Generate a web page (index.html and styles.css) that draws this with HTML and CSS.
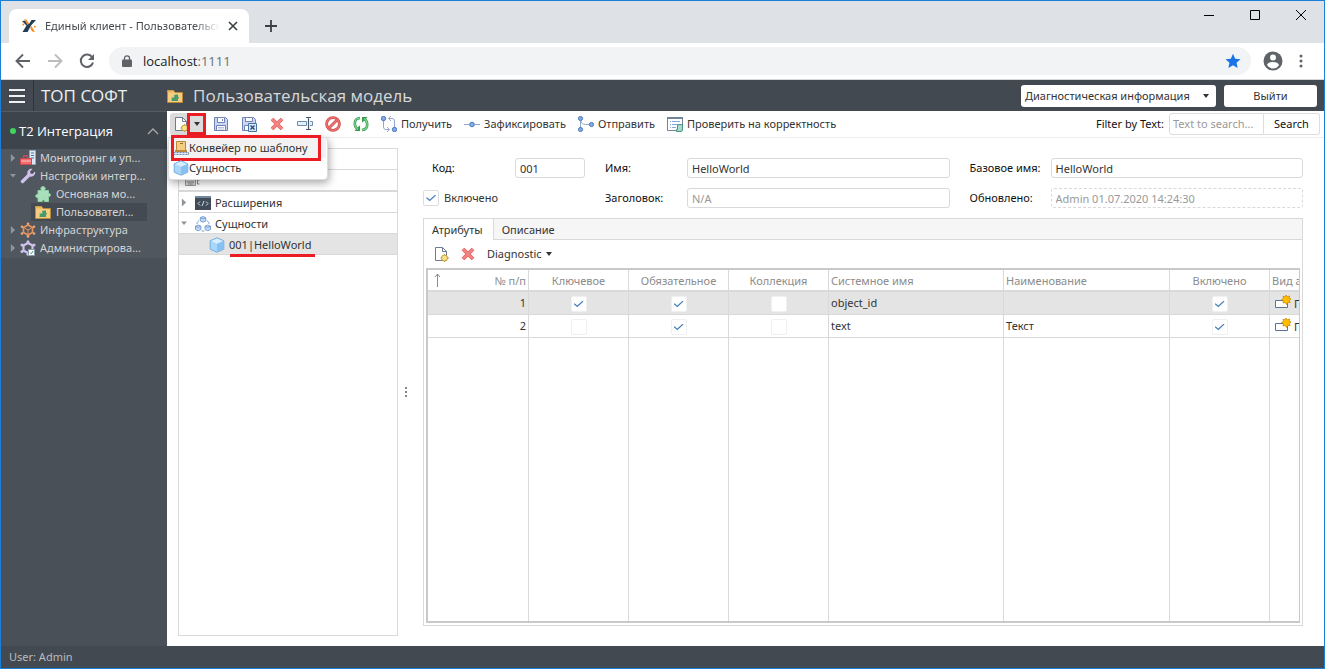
FILE: index.html
```html
<!DOCTYPE html>
<html lang="ru">
<head>
<meta charset="utf-8">
<title>Единый клиент - Пользовательская модель</title>
<link rel="stylesheet" href="styles.css">
</head>
<body>
<svg class="defs" aria-hidden="true">
  <symbol id="i-folder" viewBox="0 0 16 16"><path d="M0.5 2.5h6l1.500 2h7.500v10h-15z" fill="#f6cc80" stroke="#b98a3c"/><path d="M.5 2.500h6l1 2h-7z" fill="#e9b55b"/><path d="M4.500 9.500h3c-1-2 0-3 1-2.500V6.500h2.500v2.500c1.500-.5 1.500 1.500 0 1.500v2.500h-6.500v-1.500c1 0 1-1 0-1z" fill="#459a70"/></symbol>
  <symbol id="i-new" viewBox="0 0 16 16"><path d="M2.500 1.500h7l4 4v9h-11z" fill="#fff" stroke="#6d7c91"/><path d="M9.500 1.500v4h4" fill="none" stroke="#6d7c91"/><circle cx="11.500" cy="12" r="3" fill="#fbe38b" stroke="#c29a3d"/><path d="M11.500 8v1M11.500 15v1M7.500 12h1M14.500 12h1.500" stroke="#c29a3d"/></symbol>
  <symbol id="i-save" viewBox="0 0 16 16"><path d="M1.500 1.500h11l2 2v11h-13z" fill="#cad6f3" stroke="#7183b3"/><path d="M4.500 1.500h7v5h-7zM3.500 9.500h9v5h-9z" fill="#fff" stroke="#7183b3"/><path d="M9.500 3v2" stroke="#7183b3"/><path d="M5 11.500h6M5 13h6" stroke="#b9c2d7"/></symbol>
  <symbol id="i-saveclose" viewBox="0 0 16 16"><path d="M1.500 1.500h11l2 2v11h-13z" fill="#cad6f3" stroke="#7183b3"/><path d="M4.500 1.500h7v4h-7zM3.500 9.500h6v5h-6z" fill="#fff" stroke="#7183b3"/><path d="M7.500 7.500h8v8h-8z" fill="#d7e8ff" stroke="#4774a9"/><path d="M9.500 9.500l4 4M13.500 9.500l-4 4" stroke="#24486f" stroke-width="1.300"/></symbol>
  <symbol id="i-del" viewBox="0 0 16 16"><path d="M3 3l10 10M13 3L3 13" stroke="#e56565" stroke-width="3.800"/><path d="M3 3l10 10M13 3L3 13" stroke="#f58583" stroke-width="2"/></symbol>
  <symbol id="i-rename" viewBox="0 0 16 16"><path d="M.5 5.500h9v4h-9zM13 5.500h2.500v4H13" fill="#e4f0fc" stroke="#6e8cac"/><path d="M9 1.500h2l.5.5.5-.5h2M9 13.500h2l.5-.5.5.5h2M11.500 2v11" fill="none" stroke="#46566b" stroke-width="1.200"/></symbol>
  <symbol id="i-ban" viewBox="0 0 16 16"><circle cx="8" cy="8" r="6.400" fill="none" stroke="#c94444" stroke-width="2.800"/><circle cx="8" cy="8" r="6.400" fill="none" stroke="#f17876" stroke-width="1.400"/><path d="M3.700 12.300l8.600-8.600" stroke="#c94444" stroke-width="2.800"/><path d="M3.700 12.300l8.600-8.600" stroke="#f17876" stroke-width="1.400"/></symbol>
  <symbol id="i-refresh" viewBox="0 0 16 16"><path d="M7 2Q1.500 2.500 1.800 8q.2 3.500 3.200 5.500M9 14q5.500-.5 5.200-6-.2-3.500-3.200-5.500" fill="none" stroke="#399b50" stroke-width="2.600"/><path d="M1.500 15h5.500V9.500L5 11zM14.500 1H9v5.500L11 5z" fill="#399b50"/><path d="M7 2Q1.500 2.500 1.800 8q.2 3.500 3.200 5.500M9 14q5.500-.5 5.200-6-.2-3.500-3.200-5.500" fill="none" stroke="#7fd890" stroke-width="1.100"/></symbol>
  <symbol id="i-pull" viewBox="0 0 16 16"><path d="M2.500 3v8q0 2.500 2.500 2.500h3M6 11l2.500 2.500L6 16M13.500 13V5q0-2.500-2.500-2.500H8M10 0L7.500 2.500 10 5" fill="none" stroke="#93a9ca"/><circle cx="2.500" cy="2.500" r="2.200" fill="#7fabe9" stroke="#5079b8"/><circle cx="13.500" cy="13.500" r="2.200" fill="#7fabe9" stroke="#5079b8"/></symbol>
  <symbol id="i-commit" viewBox="0 0 16 16"><path d="M0 8.500h16" stroke="#93a9ca"/><circle cx="8" cy="8.500" r="2.300" fill="#7fabe9" stroke="#5079b8"/></symbol>
  <symbol id="i-push" viewBox="0 0 16 16"><path d="M2.500 3v10M2.500 4q1 4.500 5 4.500h6" fill="none" stroke="#93a9ca"/><circle cx="2.500" cy="2.500" r="2.100" fill="#7fabe9" stroke="#5079b8"/><circle cx="2.500" cy="13.500" r="2.100" fill="#7fabe9" stroke="#5079b8"/><circle cx="13.500" cy="8.500" r="2.100" fill="#7fabe9" stroke="#5079b8"/></symbol>
  <symbol id="i-check" viewBox="0 0 16 16"><path d="M.5 1.500h15v13H.5z" fill="#fff" stroke="#71849c"/><path d="M0 2h16" stroke="#71849c" stroke-width="2"/><path d="M3 5.500h1M3 8.500h1M3 11.500h1M5 5.500h8M5 8.500h5M5 11.500h4" stroke="#7fa8df"/><path d="M10.500 8.500h5v5l-1 2h-5v-2h1z" fill="#acd9cc" stroke="#459584"/></symbol>
  <symbol id="i-conv" viewBox="0 0 16 16"><path d="M3.500 1.500h9v9h-9z" fill="#f6cc80" stroke="#b98a3c"/><path d="M7 3.500h3" stroke="#9a722e"/><path d="M2 11h12" stroke="#b98a3c" stroke-width="2"/><path d="M.5 12.500h15v2H.5z" fill="#dbe5f4" stroke="#7389a8" stroke-dasharray="2 1"/></symbol>
  <symbol id="i-cube" viewBox="0 0 16 16"><path d="M8 .8l6.800 3v8.400l-6.800 3-6.800-3V3.800z" fill="#a8d7fb" stroke="#76aede"/><path d="M8 1.500l5.800 2.600L8 6.700 2.200 4.100z" fill="#d6eeff"/><path d="M8 7v7.500l6-2.700V4.500z" fill="#86c1f2"/></symbol>
  <symbol id="i-cubes" viewBox="0 0 16 16"><g fill="#c5e0fa" stroke="#6d95c9" stroke-width=".9"><path d="M8 .5l2.700 1.200v3.300L8 6.200 5.300 5V1.700zM3.200 9l2.700 1.200v3.300l-2.700 1.200-2.700-1.200v-3.300zM12.800 9l2.700 1.200v3.300l-2.700 1.200-2.700-1.200v-3.300z"/><path d="M5.300 1.700L8 3l2.700-1.300M.5 10.200l2.700 1.300 2.700-1.300M10.100 10.200l2.700 1.300 2.700-1.300M4 4.500Q1.800 6 1.800 8M12 4.500q2.200 1.500 2.200 3.500M6.500 14.800q1.500.8 3 0" fill="none"/></g></symbol>
  <symbol id="i-code" viewBox="0 0 16 16"><path d="M0 1h16v14H0z" fill="#414b57"/><path d="M0 2h16" stroke="#73879c" stroke-width="2"/><path d="M5 6.500l-2 2 2 2M11 6.500l2 2-2 2M9 6l-2 5" fill="none" stroke="#c9e0ed"/></symbol>
  <symbol id="i-puzzle" viewBox="0 0 16 16"><path d="M3 4.500h3.500C5 2 6.500.5 8 .5S11 2 9.500 4.500h4v3c2.500-1 2.500 4 0 3v5H9.300c.8-2-2.600-2-2 0H3v-4c-3 1-3-4 0-3z" fill="#a9dfba" stroke="#8ccfa3"/></symbol>
  <symbol id="i-wrench" viewBox="0 0 16 16"><path d="M2.500 13.500l6-6" stroke="#cfc2ec" stroke-width="3.400" stroke-linecap="round"/><path d="M12.500 1L10 3.500l.5 2 2 .5L15 3.500c1 3-2 6-5.500 5L7.500 6.500C6.500 3 9.500 0 12.500 1z" fill="#cfc2ec"/></symbol>
  <symbol id="i-tools" viewBox="0 0 16 16"><path d="M9.500.5h6v14h-6z" fill="#dce8f6" stroke="#91a9c5"/><path d="M11 3h3M11 5.500h3M11 8h3" stroke="#5577a0"/><path d="M3.500 8V6h4v2" fill="none" stroke="#d24a4e" stroke-width="1.300"/><path d="M.5 8.500h11v6H.5z" fill="#f26d71" stroke="#ce494d"/><path d="M1 11h10" stroke="#ffc0bd"/></symbol>
  <symbol id="i-infra" viewBox="0 0 16 16"><path d="M8 3l4.500 2.500v5L8 13l-4.500-2.500v-5z" fill="none" stroke="#e7935c" stroke-width="1.700"/><path d="M8 8v4M8 8L4.500 6M8 8l3.500-2" stroke="#e7935c"/><g fill="#f1a674"><circle cx="8" cy="1.700" r="1.300"/><circle cx="2" cy="4.700" r="1.300"/><circle cx="14" cy="4.700" r="1.300"/><circle cx="2" cy="11.500" r="1.300"/><circle cx="14" cy="11.500" r="1.300"/><circle cx="8" cy="14.400" r="1.300"/></g></symbol>
  <symbol id="i-admin" viewBox="0 0 16 16"><path d="M8 3l4.500 2.500v5L8 13l-4.500-2.500v-5z" fill="none" stroke="#cfc2ec" stroke-width="2.200"/><g fill="#cfc2ec"><circle cx="8" cy="1.800" r="1.500"/><circle cx="2" cy="5" r="1.500"/><circle cx="14" cy="5" r="1.500"/><circle cx="2" cy="11.500" r="1.500"/><circle cx="8" cy="14.300" r="1.500"/></g><path d="M8.500 9.500h6v6h-6z" fill="#fff" stroke="#8a98a8"/><path d="M10 12.500l1.200 1.200 2-2.700" fill="none" stroke="#2f9a5e"/></symbol>
  <symbol id="i-kind" viewBox="0 0 16 16"><path d="M.5 5.500h12v7H.5z" fill="#fff" stroke="#5b7196"/><path d="M11 0l1.300 1.800L14.500 1l-.2 2.300 1.700.7-1.700 1.500.9 2-2.300-.1L11.500 9.500l-1.300-2-2.200.5.400-2.200L6.500 4.500l2-1L8 1.300l2.200.5z" fill="#ffbf00" stroke="#cf8616" stroke-width=".8"/></symbol>
</svg>

<div class="window">
  <header class="tabstrip">
    <div class="tab">
      <svg class="icon" viewBox="0 0 16 16"><path d="M1 3l4-.5 3 3.500 2.500-4H15L10 7.500 6.500 14H1.500l4-6.500z" fill="#213d59"/><path d="M3 1.500h2.500L8 5.500 6.500 7zM9 9.500L10.500 8l3.500 6-3-.5zM.5 5.500l3 .5-1 2zM12.500 7.500l3 1-2 1.500z" fill="#f3922c"/></svg>
      <span class="tab-title">Единый клиент - Пользовательская модель</span>
      <button class="plain" aria-label="Закрыть вкладку"><svg width="10" height="10" viewBox="0 0 10 10"><path d="M1 1l8 8M9 1L1 9" stroke="#3c4043" stroke-width="1.600"/></svg></button>
    </div>
    <button class="plain newtab" aria-label="Новая вкладка"><svg width="14" height="14" viewBox="0 0 14 14"><path d="M7 1v12M1 7h12" stroke="#3c4043" stroke-width="1.800"/></svg></button>
    <div class="winbtns">
      <button class="plain" aria-label="Свернуть"><svg width="10" height="10" viewBox="0 0 10 10"><path d="M0 5.500h10" stroke="#000"/></svg></button>
      <button class="plain" aria-label="Развернуть"><svg width="10" height="10" viewBox="0 0 10 10"><path d="M.5.5h9v9h-9z" fill="none" stroke="#000"/></svg></button>
      <button class="plain" aria-label="Закрыть"><svg width="10" height="10" viewBox="0 0 10 10"><path d="M0 0l10 10M10 0L0 10" stroke="#000"/></svg></button>
    </div>
  </header>
  <div class="navbar">
    <button class="plain" aria-label="Назад"><svg width="16" height="16" viewBox="0 0 16 16"><path d="M15 8H2M8 1.500L1.500 8 8 14.500" fill="none" stroke="#5f6368" stroke-width="1.900"/></svg></button>
    <button class="plain" aria-label="Вперёд"><svg width="16" height="16" viewBox="0 0 16 16"><path d="M1 8h13M8 1.500L14.500 8 8 14.500" fill="none" stroke="#babcbe" stroke-width="1.900"/></svg></button>
    <button class="plain" aria-label="Обновить"><svg width="16" height="16" viewBox="0 0 16 16"><path d="M13.300 4.500A6.200 6.200 0 1 0 14 9.500" fill="none" stroke="#5f6368" stroke-width="2"/><path d="M15 1v6H9z" fill="#5f6368"/></svg></button>
    <div class="address">
      <svg width="10" height="12" viewBox="0 0 10 12"><path d="M1 4.500h8q1 0 1 1V11q0 1-1 1H1q-1 0-1-1V5.500q0-1 1-1z" fill="#5f6368"/><path d="M2.500 5V3a2.500 2.200 0 0 1 5 0v2" fill="none" stroke="#5f6368" stroke-width="1.300"/></svg>
      <span class="url">localhost<span class="port">:1111</span></span>
      <svg class="icon star" viewBox="0 0 16 16"><path d="M8 .8l2.200 4.900 5.300.5-4 3.500 1.200 5.300L8 12.200 3.300 15l1.200-5.300-4-3.500 5.300-.5z" fill="#1a73e8"/></svg>
    </div>
    <button class="plain" aria-label="Профиль"><svg width="20" height="20" viewBox="0 0 20 20"><circle cx="10" cy="10" r="9.500" fill="#5f6368"/><circle cx="10" cy="6.500" r="3" fill="#fff"/><path d="M4 14q1-3 6-3t6 3q-2 3.500-6 3.500T4 14z" fill="#fff"/></svg></button>
    <button class="plain" aria-label="Меню"><svg width="4" height="14" viewBox="0 0 4 14"><g fill="#5f6368"><circle cx="2" cy="2" r="1.500"/><circle cx="2" cy="7" r="1.500"/><circle cx="2" cy="12" r="1.500"/></g></svg></button>
  </div>

  <div class="apphead">
    <button class="plain burger" aria-label="Меню приложения"><svg width="16" height="14" viewBox="0 0 16 14"><path d="M0 1h16M0 7h16M0 13h16" stroke="#eef0f1" stroke-width="2"/></svg></button>
    <div class="brand">ТОП СОФТ</div>
    <svg class="icon"><use href="#i-folder"/></svg>
    <h1>Пользовательская модель</h1>
    <button class="whitebtn diag">Диагностическая информация <i class="caret"></i></button>
    <button class="whitebtn exit">Выйти</button>
  </div>

  <div class="appbody">
    <nav class="sidebar">
      <div class="group"><i class="dot"></i><span>T2 Интеграция</span><svg width="12" height="7" viewBox="0 0 12 7"><path d="M1 6l5-5 5 5" fill="none" stroke="#a5a9ad" stroke-width="1.300"/></svg></div>
      <ul class="menu">
        <li><i class="tri"></i><svg class="icon"><use href="#i-tools"/></svg><span>Мониторинг и уп...</span></li>
        <li><i class="tri open"></i><svg class="icon"><use href="#i-wrench"/></svg><span>Настройки интегр...</span></li>
        <li class="sub"><svg class="icon"><use href="#i-puzzle"/></svg><span>Основная мо...</span></li>
        <li class="sub current"><svg class="icon"><use href="#i-folder"/></svg><span>Пользовател...</span></li>
        <li><i class="tri"></i><svg class="icon"><use href="#i-infra"/></svg><span>Инфраструктура</span></li>
        <li><i class="tri"></i><svg class="icon"><use href="#i-admin"/></svg><span>Администрирова...</span></li>
      </ul>
    </nav>

    <main class="main">
      <div class="toolbar">
        <div class="split">
          <button class="plain" aria-label="Создать"><svg class="icon"><use href="#i-new"/></svg></button>
          <button class="plain marked" aria-label="Варианты создания"><i class="caret"></i></button>
          <ul class="popup">
            <li class="hot"><svg class="icon"><use href="#i-conv"/></svg>Конвейер по шаблону</li>
            <li><svg class="icon"><use href="#i-cube"/></svg>Сущность</li>
          </ul>
        </div>
        <div class="tools">
          <button class="plain" aria-label="Сохранить"><svg class="icon"><use href="#i-save"/></svg></button>
          <button class="plain" aria-label="Сохранить и закрыть"><svg class="icon"><use href="#i-saveclose"/></svg></button>
          <button class="plain" aria-label="Удалить"><svg class="icon"><use href="#i-del"/></svg></button>
          <button class="plain" aria-label="Переименовать"><svg class="icon"><use href="#i-rename"/></svg></button>
          <button class="plain" aria-label="Отменить"><svg class="icon"><use href="#i-ban"/></svg></button>
          <button class="plain" aria-label="Обновить модель"><svg class="icon"><use href="#i-refresh"/></svg></button>
          <button class="plain"><svg class="icon"><use href="#i-pull"/></svg>Получить</button>
          <button class="plain"><svg class="icon"><use href="#i-commit"/></svg>Зафиксировать</button>
          <button class="plain"><svg class="icon"><use href="#i-push"/></svg>Отправить</button>
          <button class="plain"><svg class="icon"><use href="#i-check"/></svg>Проверить на корректность</button>
        </div>
        <div class="filter">
          <label for="filter">Filter by Text:</label>
          <input id="filter" type="text" placeholder="Text to search..."><button>Search</button>
        </div>
      </div>

      <div class="work">
        <div class="tree">
          <div class="treerow"></div>
          <div class="treerow filterrow"><svg width="16" height="12" viewBox="0 0 16 12"><path d="M.5 1.500h10v9H.5z" fill="#ddd" stroke="#999"/><path d="M2 7h7M3 9h5M14.500 5h-2v4h2" fill="none" stroke="#888"/></svg></div>
          <div class="treerow"><i class="tri"></i><svg class="icon"><use href="#i-code"/></svg><span>Расширения</span></div>
          <div class="treerow"><i class="tri open"></i><svg class="icon"><use href="#i-cubes"/></svg><span>Сущности</span></div>
          <div class="treerow leaf"><svg class="icon"><use href="#i-cube"/></svg><span class="underlined">001|HelloWorld</span></div>
        </div>
        <div class="splitter"><i></i><i></i><i></i></div>

        <div class="detail">
          <form class="form">
            <label class="first" for="code">Код:</label><input id="code" type="text" value="001">
            <label for="name">Имя:</label><input id="name" type="text" value="HelloWorld">
            <label for="base">Базовое имя:</label><input id="base" type="text" value="HelloWorld">
            <label class="check"><input type="checkbox" checked>Включено</label>
            <label for="caption">Заголовок:</label><input id="caption" type="text" placeholder="N/A">
            <label for="updated">Обновлено:</label><input id="updated" class="readonly" type="text" value="Admin 01.07.2020 14:24:30" readonly>
          </form>

          <section class="panel">
            <div class="tabs" role="tablist"><button class="active" role="tab">Атрибуты</button><button role="tab">Описание</button></div>
            <div class="subtools">
              <button class="plain" aria-label="Создать атрибут"><svg class="icon"><use href="#i-new"/></svg></button>
              <button class="plain" aria-label="Удалить атрибут"><svg class="icon"><use href="#i-del"/></svg></button>
              <button class="plain">Diagnostic <i class="caret"></i></button>
            </div>
            <div class="gridwrap">
              <table>
                <colgroup><col class="w101"><col class="w100"><col class="w100"><col class="w100"><col class="w175"><col class="w166"><col class="w100"><col></colgroup>
                <thead><tr><th class="num"><svg width="7" height="14" viewBox="0 0 7 14"><path d="M3.500 14V1M1 4l2.500-3L6 4" fill="none" stroke="#8c8c8c"/></svg>№ п/п</th><th class="mid">Ключевое</th><th class="mid">Обязательное</th><th class="mid">Коллекция</th><th>Системное имя</th><th>Наименование</th><th class="mid">Включено</th><th>Вид атрибута</th></tr></thead>
                <tbody>
                  <tr class="selected"><td class="num">1</td><td class="mid"><input type="checkbox" aria-label="Ключевое" checked></td><td class="mid"><input type="checkbox" aria-label="Обязательное" checked></td><td class="mid"><input type="checkbox" aria-label="Коллекция"></td><td>object_id</td><td></td><td class="mid"><input type="checkbox" aria-label="Включено" checked></td><td class="kind"><svg class="icon"><use href="#i-kind"/></svg>Поле</td></tr>
                  <tr><td class="num">2</td><td class="mid"><input type="checkbox" aria-label="Ключевое"></td><td class="mid"><input type="checkbox" aria-label="Обязательное" checked></td><td class="mid"><input type="checkbox" aria-label="Коллекция"></td><td>text</td><td>Текст</td><td class="mid"><input type="checkbox" aria-label="Включено" checked></td><td class="kind"><svg class="icon"><use href="#i-kind"/></svg>Поле</td></tr>
                  <tr class="rest"><td></td><td></td><td></td><td></td><td></td><td></td><td></td><td></td></tr>
                </tbody>
              </table>
            </div>
          </section>
        </div>
      </div>
    </main>
  </div>
  <footer class="status">User: Admin</footer>
</div>
</body>
</html>
```
FILE: styles.css
```css
* { box-sizing: border-box; }
html, body { height: 100%; margin: 0; }
body { font: 11px/16px "Noto Sans", "Open Sans", sans-serif; color: #333; }
button, input { font: inherit; color: inherit; }
ul { list-style: none; margin: 0; padding: 0; }
.defs { position: absolute; width: 0; height: 0; }
.icon { width: 16px; height: 16px; flex: none; }
.plain { display: flex; align-items: center; border: 0; background: none; padding: 0; gap: 4px; white-space: nowrap; }
.caret { display: inline-block; border: 3px solid transparent; border-top: 4px solid #333; border-bottom: 0; }

.window { height: 100vh; display: flex; flex-direction: column; border: 1px solid #1a7fd6; background: #fff; }

/* Browser frame */
.tabstrip { flex: none; height: 42px; background: #dee1e6; display: flex; padding: 8px 18px 0 8px; }
.tab { width: 240px; background: #fff; border-radius: 8px 8px 0 0; display: flex; align-items: center; padding: 0 11px 0 12px; gap: 8px; }
.tab-title { flex: 1; overflow: hidden; white-space: nowrap; color: #45494d; -webkit-mask-image: linear-gradient(to right, #000 85%, transparent); mask-image: linear-gradient(to right, #000 85%, transparent); }
.newtab { margin-left: 15px; }
.winbtns { margin-left: auto; display: flex; gap: 36px; height: 12px; }
.navbar { flex: none; height: 37px; display: flex; align-items: center; gap: 16px; padding: 0 21px 0 14px; border-bottom: 1px solid #d5d7da; }
.address { flex: 1; height: 28px; border-radius: 14px; background: #f1f3f4; display: flex; align-items: center; gap: 11px; padding: 0 10px 0 13px; margin: 0 -4px 0 -2px; }
.url { flex: 1; font-family: "Open Sans", sans-serif; font-size: 13px; color: #202124; }
.port { color: #6c7075; }

/* Application header */
.apphead { flex: none; height: 31px; background: #434950; display: flex; align-items: center; padding-right: 7px; }
.burger { width: 33px; height: 31px; justify-content: center; border-right: 1px solid #2f3439; }
.brand, h1 { font: 400 17px/24px "Open Sans", sans-serif; padding-top: 1px; }
.brand { width: 133px; padding-left: 7px; color: #eef0f1; }
h1 { flex: 1; margin: 0 0 0 10px; color: #d6d8da; }
.whitebtn { height: 22px; border: 0; border-radius: 3px; background: #fff; padding: 0 4px; white-space: nowrap; }
.diag { width: 195px; display: flex; align-items: center; justify-content: space-between; padding-right: 7px; }
.exit { width: 93px; margin-left: 8px; }

.appbody { flex: 1; min-height: 0; display: flex; }
.sidebar { flex: none; width: 166px; background: #495057; color: #d3d5d7; }
.group { height: 38px; border-top: 1px solid #555b62; background: #3e444b; display: flex; align-items: center; padding: 1px 8px 0 9px; gap: 3px; font: 13px/18px "Open Sans", sans-serif; color: #fff; }
.group span { flex: 1; }
.dot { width: 6px; height: 6px; border-radius: 50%; background: #3fd35f; }
.menu { background: #50575e; padding-bottom: 1px; }
.menu li { height: 18px; display: flex; align-items: center; padding-left: 9px; gap: 4px; white-space: nowrap; }
.menu .sub { margin: 0 20px 0 30px; padding-left: 4px; gap: 5px; }
.menu .current { background: #434a51; }
.tri { flex: none; width: 6px; height: 8px; background: #8f959b; clip-path: polygon(15% 0, 85% 50%, 15% 100%); }
.tri.open { clip-path: polygon(0 25%, 100% 25%, 50% 70%); }

.main { flex: 1; min-width: 0; display: flex; flex-direction: column; }
.toolbar { flex: none; height: 27px; border-bottom: 1px solid #eee; display: flex; align-items: center; padding: 0 4px 1px 3px; }
.split { position: relative; display: flex; height: 22px; width: 36px; background: #dcdcdc; border-radius: 3px; padding-left: 3px; }
.marked { width: 19px; height: 22px; border: 3px solid #ed1c24; justify-content: center; margin-left: -2px; }
.popup { position: absolute; z-index: 2; top: 24px; left: -2px; width: 160px; padding: 0 1px 1px; background: #fff; border: 1px solid #ddd; border-radius: 4px; box-shadow: 1px 3px 8px rgba(0,0,0,.35); }
.popup li { position: relative; display: flex; align-items: center; height: 20px; padding-left: 3px; white-space: nowrap; }
.popup .hot { background: #f2f2f2; }
.popup .hot::after { content: ""; position: absolute; inset: -3px 5px -3px 1px; border: 3px solid #ed1c24; }
.tools { flex: 1; display: flex; gap: 12px; padding-left: 7px; }
.filter { display: flex; align-items: center; color: #111; }
.filter label { margin-right: 5px; }
.filter input { width: 95px; height: 22px; border: 1px solid #ddd; border-radius: 3px 0 0 3px; padding: 0 3px; }
.filter button { width: 56px; height: 22px; border: 1px solid #ddd; border-left: 0; border-radius: 0 3px 3px 0; background: #fff; padding: 0; }
::placeholder { color: #999; opacity: 1; }

.work { flex: 1; min-height: 0; display: flex; padding: 10px 21px 10px 11px; }
.tree { flex: none; width: 220px; border: 1px solid #d9d9d9; }
.treerow { height: 21px; border-bottom: 1px solid #d9d9d9; display: flex; align-items: center; padding: 1px 0 0 2px; gap: 4px; }
.treerow .icon { margin-left: 4px; }
.filterrow { height: 22px; border-bottom-width: 2px; padding-left: 6px; }
.leaf { padding-left: 26px; background: #e4e4e4; }
.underlined { position: relative; }
.underlined::after { content: ""; position: absolute; left: 1px; right: -4px; top: 17px; border-top: 3px solid #ed1c24; }
.splitter { flex: none; width: 16px; display: flex; flex-direction: column; align-items: center; justify-content: center; gap: 2px; }
.splitter i { width: 2px; height: 2px; background: #888; }

.detail { flex: 1; min-width: 0; display: flex; flex-direction: column; margin: 0 0 10px 9px; }
.form { display: grid; grid-template-columns: 92px 70px 102px 26fr 101px 25fr; row-gap: 10px; padding-top: 10px; align-items: center; color: #111; }
.form label { padding-left: 20px; white-space: nowrap; }
.form .first { padding-left: 9px; }
.form .check { grid-column: span 2; padding: 0; display: flex; align-items: center; gap: 5px; color: #333; }
.form input[type=text] { width: 100%; min-width: 0; height: 20px; border: 1px solid #d9d9d9; border-radius: 3px; padding: 0 4px; color: #333; }
.form .readonly[type=text] { border-style: dashed; color: #999; }
input[type=checkbox] { appearance: none; width: 16px; height: 16px; margin: 0; border: 1px solid #ddd; border-radius: 2px; background: #fff; display: grid; place-items: center; }
input[type=checkbox]:checked::before { content: ""; width: 10px; height: 7px; background: #4a80bd; clip-path: polygon(0 50%, 10% 38%, 38% 70%, 90% 4%, 100% 16%, 38% 98%); }

.panel { flex: 1; min-height: 0; margin-top: 10px; border: 1px solid #d9d9d9; display: flex; flex-direction: column; padding-bottom: 2px; }
.tabs { flex: none; height: 21px; background: #f6f6f6; border-bottom: 1px solid #d9d9d9; display: flex; }
.tabs button { border: 0; background: none; padding: 1px 8px 0; height: 20px; }
.tabs .active { height: 21px; background: #fff; border-right: 1px solid #d9d9d9; padding-right: 10px; }
.subtools { flex: none; height: 28px; display: flex; align-items: center; gap: 11px; padding-left: 9px; }
.gridwrap { flex: 1; min-height: 0; overflow: hidden; margin: 0 2px; border: 2px solid #c9c9c9; border-right-width: 1px; }
table { width: 100%; height: 100%; border-collapse: separate; border-spacing: 0; table-layout: fixed; }
.w100 { width: 100px; } .w101 { width: 101px; } .w166 { width: 166px; } .w175 { width: 175px; }
th, td { height: 23px; padding: 0 2px; text-align: left; font-weight: 400; border-right: 1px solid #d9d9d9; border-bottom: 1px solid #d9d9d9; white-space: nowrap; overflow: hidden; }
th { height: 22px; padding-top: 1px; color: #8c8c8c; border-bottom-width: 2px; }
th:last-child, td:last-child { border-right: 0; }
.num { text-align: right; }
th svg { float: left; margin-left: 4px; }
.mid { text-align: center; }
.mid input[type=checkbox] { margin: 2px auto 0; border-color: #f0f0f0; }
.selected td { background: #e4e4e4; }
.kind .icon { vertical-align: -3px; margin: 0 3px; }
.rest td { height: auto; border-bottom: 0; }

.status { flex: none; height: 22px; background: #434950; color: #b9bcbf; padding: 3px 8px; }
```
